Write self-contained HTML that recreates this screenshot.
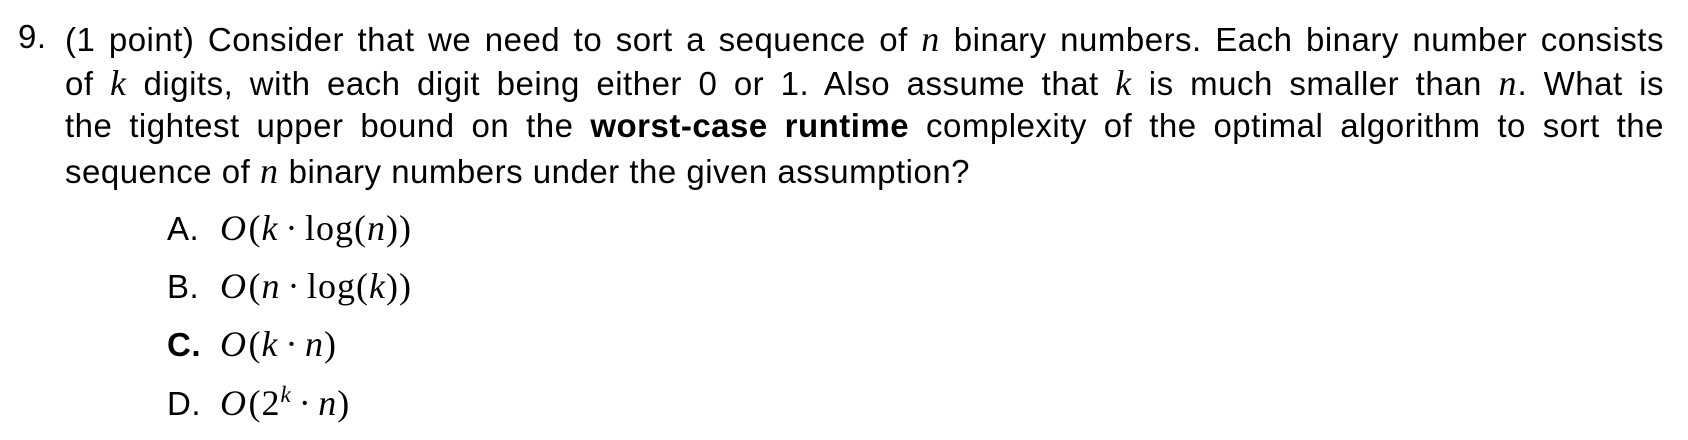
<!DOCTYPE html>
<html><head><meta charset="utf-8"><style>
html,body{margin:0;padding:0;background:#fff;}
body{width:1688px;height:440px;position:relative;overflow:hidden;font-family:"Liberation Sans","DejaVu Sans",sans-serif;font-size:33px;letter-spacing:0.5px;color:#000;}
.l{position:absolute;left:65px;width:1599px;white-space:nowrap;}
.j{text-align:justify;text-align-last:justify;white-space:normal;}
.m{font-family:"Liberation Serif",serif;font-style:italic;font-size:36px;letter-spacing:1px;}
.r{font-family:"Liberation Serif",serif;font-size:36px;letter-spacing:1px;}
.d{font-family:"Liberation Serif",serif;font-size:36px;padding:0 7px;}
.o{position:absolute;left:167px;white-space:nowrap;}
.o .k{display:inline-block;width:53px;}
.cal{font-family:"Liberation Serif",serif;font-style:italic;font-size:36px;padding-right:2px;}
</style></head><body>
<div style="position:absolute;left:18px;top:18px">9.</div>
<div class="l j" style="top:18px">(1 point) Consider that we need to sort a sequence of <span class="m">n</span> binary numbers. Each binary number consists</div>
<div class="l j" style="top:62px">of <span class="m">k</span> digits, with each digit being either 0 or 1. Also assume that <span class="m">k</span> is much smaller than <span class="m">n</span>. What is</div>
<div class="l j" style="top:107px">the tightest upper bound on the <b>worst-case runtime</b> complexity of the optimal algorithm to sort the</div>
<div class="l" style="top:150px">sequence of <span class="m">n</span> binary numbers under the given assumption?</div>
<div class="o" style="top:207px"><span class="k">A.</span><span class="cal">O</span><span class="r">(</span><span class="m">k</span><span class="d">·</span><span class="r">log(</span><span class="m">n</span><span class="r">))</span></div>
<div class="o" style="top:265px"><span class="k">B.</span><span class="cal">O</span><span class="r">(</span><span class="m">n</span><span class="d">·</span><span class="r">log(</span><span class="m">k</span><span class="r">))</span></div>
<div class="o" style="top:323px"><span class="k"><b>C.</b></span><span class="cal">O</span><span class="r">(</span><span class="m">k</span><span class="d">·</span><span class="m">n</span><span class="r">)</span></div>
<div class="o" style="top:382px"><span class="k">D.</span><span class="cal">O</span><span class="r">(2<sup style="font-style:italic;font-size:23px;line-height:0">k</sup></span><span class="d">·</span><span class="m">n</span><span class="r">)</span></div>
</body></html>
